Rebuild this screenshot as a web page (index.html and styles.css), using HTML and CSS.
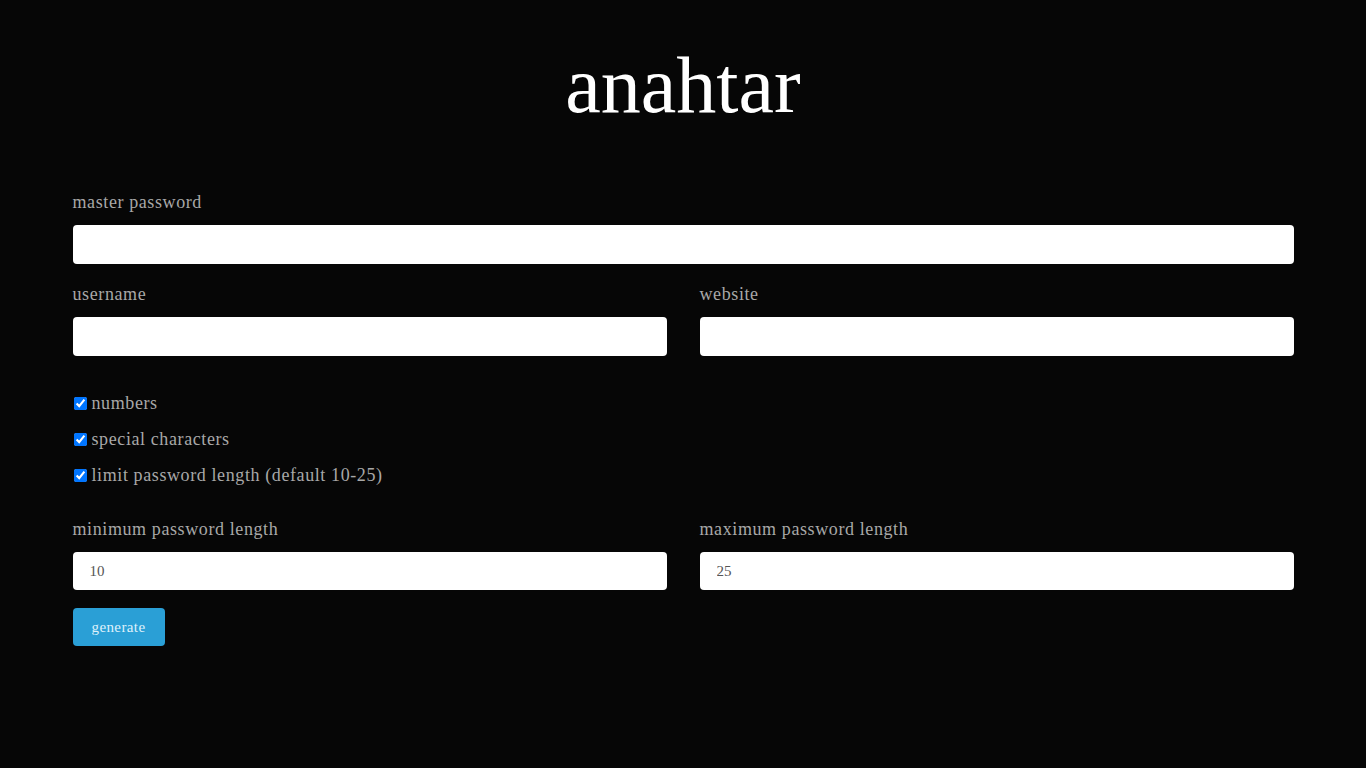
FILE: index.html
```html
<!DOCTYPE html>
<html lang="en">
<head>
<meta charset="utf-8">
<title>anahtar</title>
<link rel="stylesheet" href="styles.css">
</head>
<body>
<h1 class="title">anahtar</h1>
<form class="form">
  <div class="field">
    <label class="label" for="master">master password</label>
    <input class="input" id="master" type="password">
  </div>
  <div class="row">
    <div class="field">
      <label class="label" for="user">username</label>
      <input class="input" id="user" type="text">
    </div>
    <div class="field">
      <label class="label" for="site">website</label>
      <input class="input" id="site" type="text">
    </div>
  </div>
  <div class="checks">
    <label class="check"><input type="checkbox" checked class="box">numbers</label>
    <label class="check"><input type="checkbox" checked class="box">special characters</label>
    <label class="check"><input type="checkbox" checked class="box">limit password length (default 10-25)</label>
  </div>
  <div class="row row-len">
    <div class="field">
      <label class="label" for="min">minimum password length</label>
      <input class="input input-sm" id="min" type="text" value="10">
    </div>
    <div class="field">
      <label class="label" for="max">maximum password length</label>
      <input class="input input-sm" id="max" type="text" value="25">
    </div>
  </div>
  <button type="button" class="btn">generate</button>
</form>
</body>
</html>
```

FILE: styles.css
```css
html, body {
  margin: 0;
  padding: 0;
  background: #060606;
}
body {
  font-family: "Liberation Serif", serif;
  color: #a8a8a8;
}
.title {
  margin: 41px 0 0;
  text-align: center;
  font-size: 80px;
  line-height: 88px;
  font-weight: normal;
  color: #ffffff;
}
.form {
  width: 1221px;
  margin: 63px auto 0;
  display: flex;
  flex-direction: column;
}
.field {
  display: flex;
  flex-direction: column;
  flex: 1;
}
.label {
  font-size: 18px;
  line-height: 20px;
  letter-spacing: 0.6px;
  color: #a8a8a8;
  margin-bottom: 13px;
}
.input {
  height: 39px;
  box-sizing: border-box;
  border: 0;
  border-radius: 4px;
  background: #ffffff;
  padding: 0 17px;
  font-family: "Liberation Serif", serif;
  font-size: 15px;
  color: #555555;
  outline: none;
}
.input-sm {
  height: 38px;
}
.row {
  display: flex;
  gap: 33px;
  margin-top: 20px;
}
.checks {
  display: flex;
  flex-direction: column;
  gap: 16px;
  margin-top: 37px;
}
.check {
  display: flex;
  align-items: center;
  height: 20px;
  font-size: 18px;
  letter-spacing: 0.6px;
  color: #a8a8a8;
}
.box {
  width: 13px;
  height: 13px;
  margin: 0 5px 0 1px;
}
.row-len {
  margin-top: 34px;
}
.btn {
  align-self: flex-start;
  margin-top: 18px;
  width: 92px;
  height: 38px;
  border: 0;
  border-radius: 4px;
  background: #2a9fd6;
  color: #dff1fb;
  font-family: "Liberation Serif", serif;
  font-size: 15px;
  letter-spacing: 0.4px;
  padding: 0;
}
```
